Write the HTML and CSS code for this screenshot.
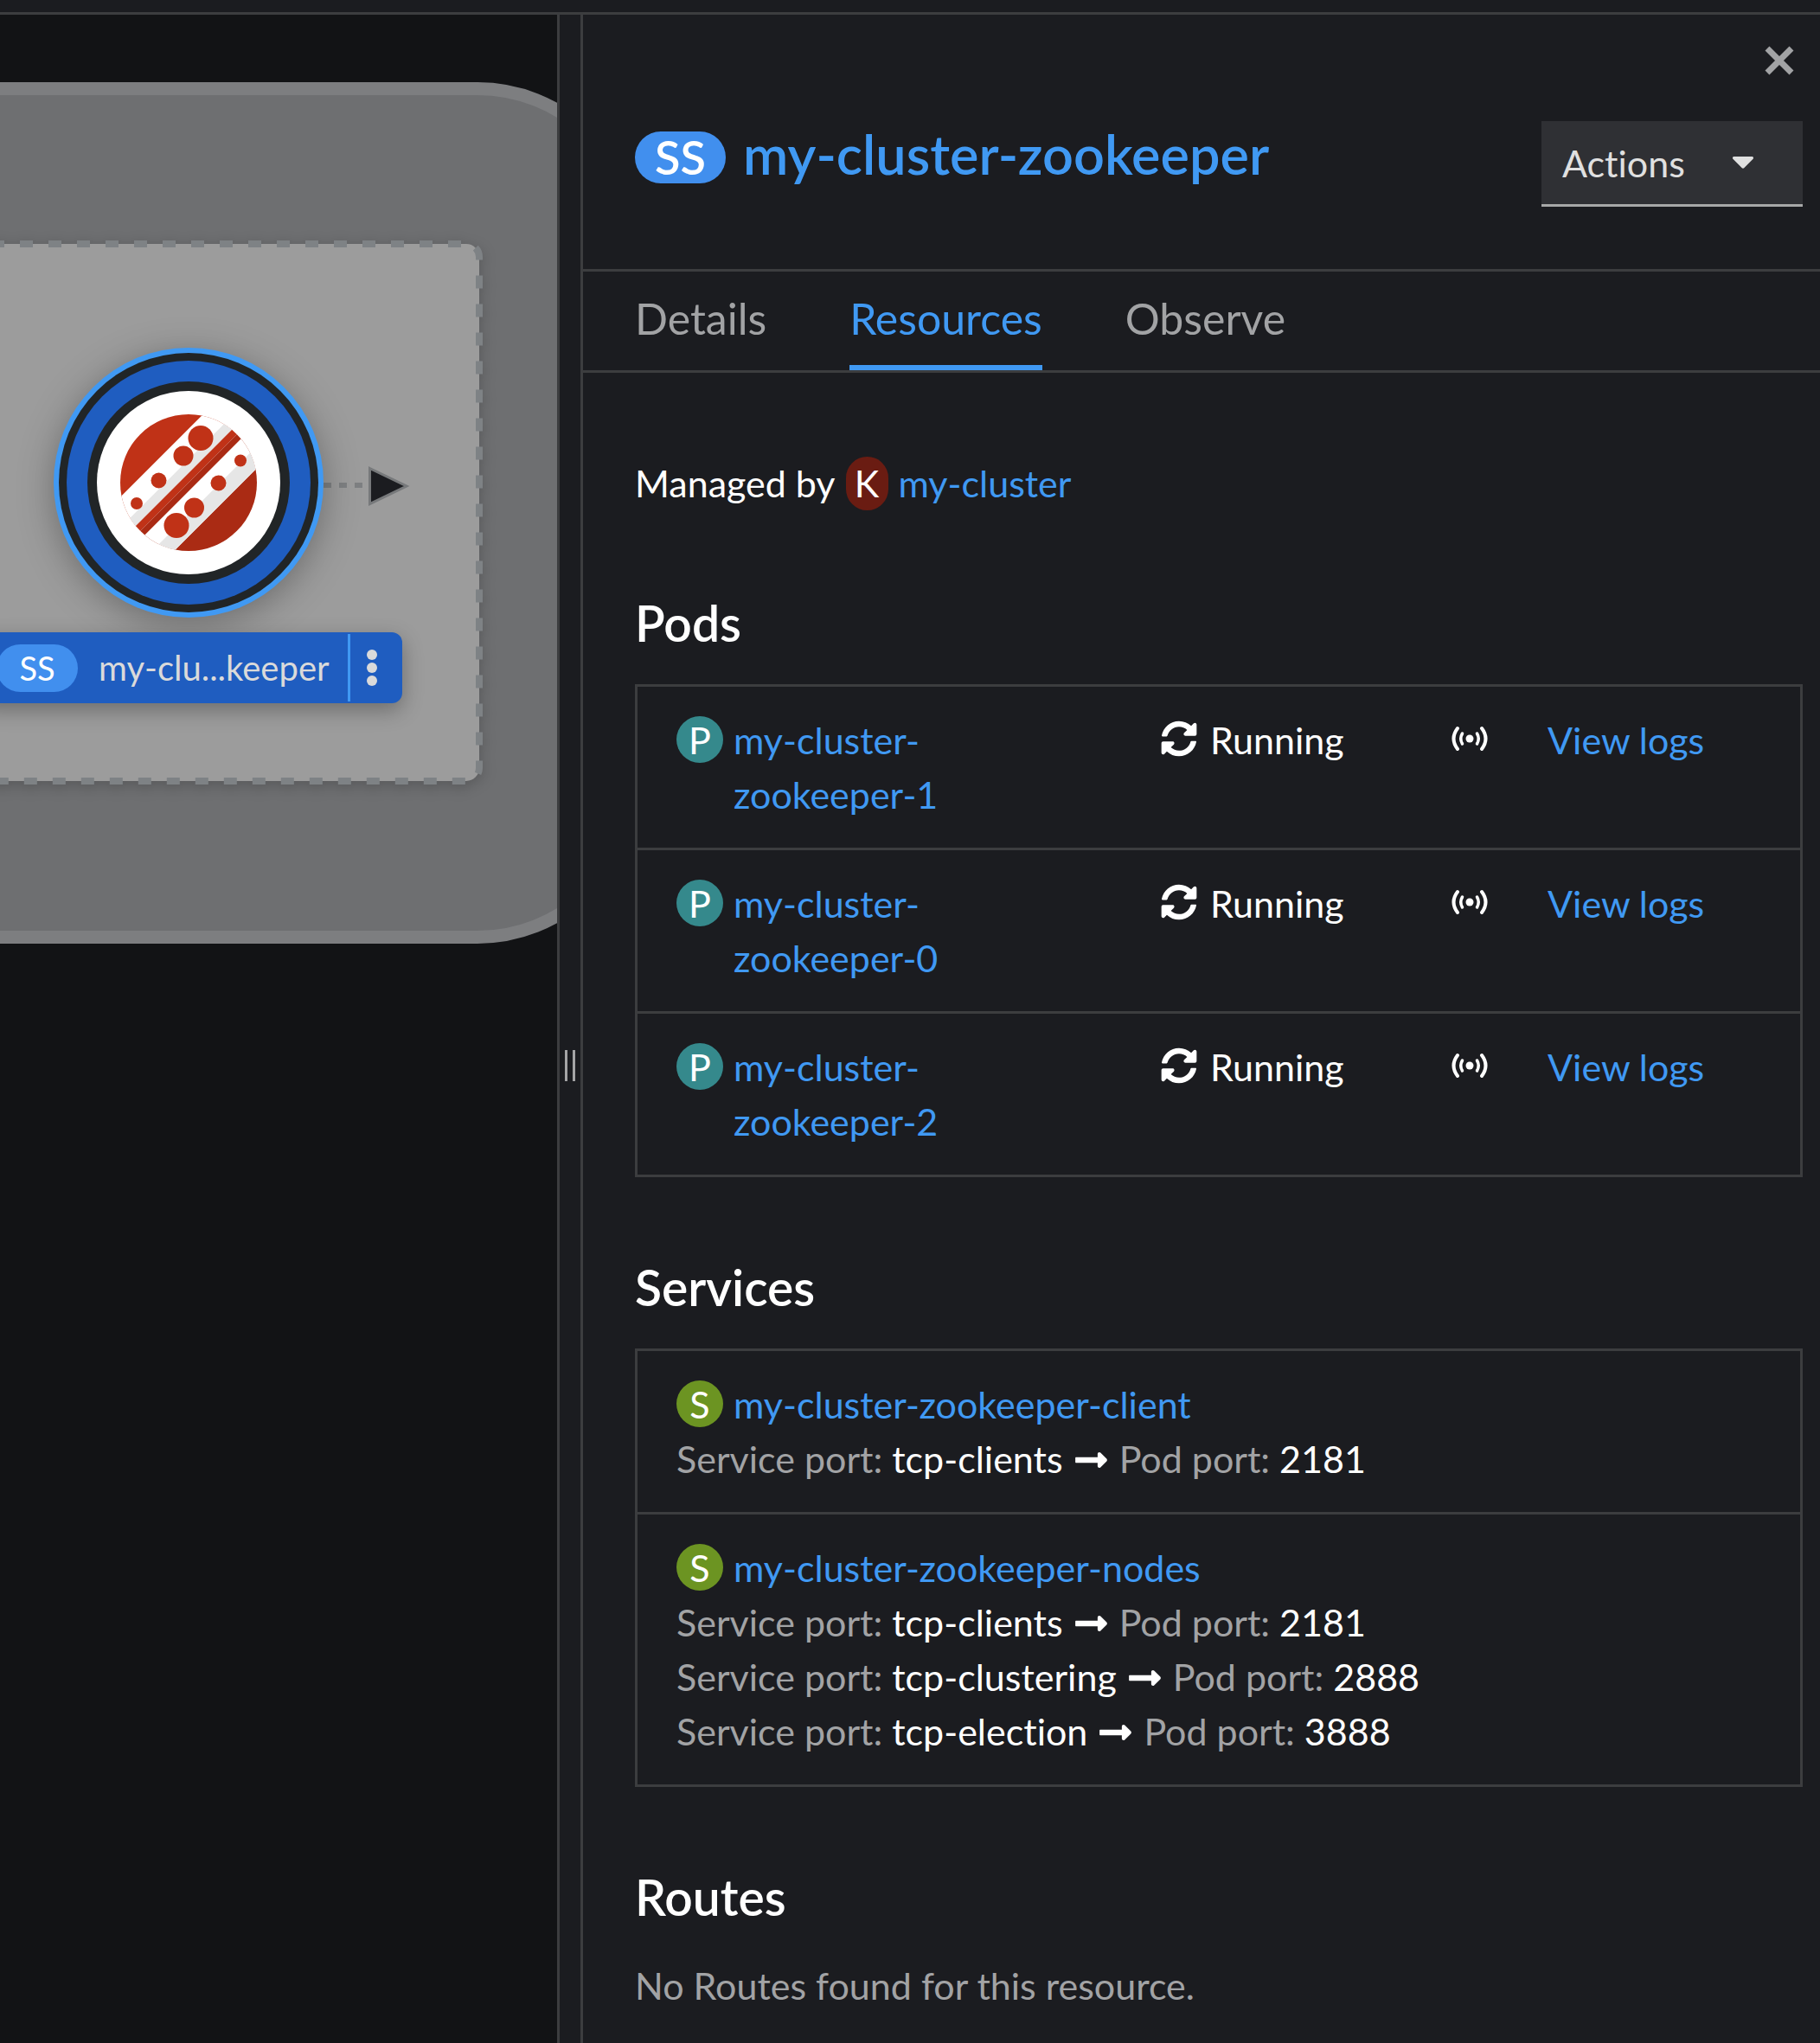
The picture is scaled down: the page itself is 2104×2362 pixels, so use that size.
FILE: index.html
```html
<!DOCTYPE html>
<html lang="en">
<head>
<meta charset="utf-8">
<title>my-cluster-zookeeper</title>
<link rel="stylesheet" href="styles.css">
</head>
<body>
<svg class="sprite" aria-hidden="true">
  <symbol id="i-sync" viewBox="0 0 512 512"><path d="M370.72 133.28C339.458 104.008 298.888 87.962 255.848 88c-77.458.068-144.328 53.178-162.791 126.85-1.344 5.363-6.122 9.15-11.651 9.15H24.103c-7.498 0-13.194-6.807-11.807-14.176C33.933 94.924 134.813 8 256 8c66.448 0 126.791 26.136 171.315 68.685L463.03 40.97C478.149 25.851 504 36.559 504 57.941V192c0 13.255-10.745 24-24 24H345.941c-21.382 0-32.09-25.851-16.971-40.971l41.75-41.749zM32 296h134.059c21.382 0 32.09 25.851 16.971 40.971l-41.75 41.75c31.262 29.273 71.835 45.319 114.876 45.28 77.418-.07 144.315-53.144 162.787-126.849 1.344-5.363 6.122-9.15 11.651-9.15h57.304c7.498 0 13.194 6.807 11.807 14.176C478.067 417.076 377.187 504 256 504c-66.448 0-126.791-26.136-171.315-68.685L48.97 471.03C33.851 486.149 8 475.441 8 454.059V320c0-13.255 10.745-24 24-24z"/></symbol>
  <symbol id="i-arrow" viewBox="0 0 448 512"><path d="M313.941 216H12c-6.627 0-12 5.373-12 12v56c0 6.627 5.373 12 12 12h301.941v46.059c0 21.382 25.851 32.09 40.971 16.971l86.059-86.059c9.373-9.373 9.373-24.569 0-33.941l-86.059-86.059c-15.119-15.119-40.971-4.411-40.971 16.971V216z"/></symbol>
  <symbol id="i-signal" viewBox="0 0 42 42"><circle cx="21" cy="21" r="4.500"/><g fill="none" stroke="currentColor" stroke-linecap="round"><path d="M12.500 15Q9 21 12.500 27M29.500 15Q33 21 29.500 27" stroke-width="3.500"/><path d="M7 9Q-2 21 7 33M35 9Q44 21 35 33" stroke-width="4"/></g></symbol>
</svg>

<div class="masthead"></div>
<div class="workspace">
  <section class="canvas" aria-label="Topology">
    <svg class="graph" width="644" height="1200" aria-hidden="true">
      <defs>
        <clipPath id="logo-clip"><circle cx="218" cy="558" r="79"/></clipPath>
      </defs>
      <rect class="group" x="-400" y="102.500" width="1135" height="981" rx="183"/>
      <rect class="subgroup" x="-322" y="282" width="876" height="621" rx="15"/>
      <path class="edge" d="M374 561H420"/>
      <path class="edge-head" d="M427.500 541.500L470 562L427.500 582.500Z"/>
      <g class="node">
        <circle cx="218" cy="558" r="156" fill="#4099f3"/>
        <circle cx="218" cy="558" r="150" fill="#212527"/>
        <circle cx="218" cy="558" r="141" fill="#1f5dc0"/>
        <circle cx="218" cy="558" r="117" fill="#212527"/>
        <circle cx="218" cy="558" r="106" fill="#fff"/>
      </g>
      <g clip-path="url(#logo-clip)">
        <g transform="translate(218 558) rotate(-45)">
          <rect x="-80" y="-80" width="160" height="80" fill="#c03217"/>
          <rect x="-80" y="0" width="160" height="80" fill="#aa2b14"/>
          <rect x="-80" y="-44" width="160" height="36" fill="#fff"/>
          <rect x="-80" y="-19" width="160" height="11" fill="#e6e6e6"/>
          <rect x="-80" y="7" width="160" height="37" fill="#fff"/>
          <rect x="-80" y="26" width="160" height="18" fill="#e6e6e6"/>
        </g>
        <g fill="#c03217">
          <circle cx="232" cy="506.500" r="14.500"/><circle cx="212" cy="527" r="11.500"/><circle cx="183.500" cy="555.500" r="9"/><circle cx="158" cy="582" r="7"/>
          <circle cx="278" cy="532.500" r="7"/><circle cx="252.500" cy="558.500" r="9"/><circle cx="224.500" cy="587" r="11.500"/><circle cx="204" cy="607.500" r="14.500"/>
        </g>
      </g>
    </svg>
    <div class="node-label">
      <span class="pill pill-small">SS</span>
      <span class="node-name">my-clu...keeper</span>
      <button class="kebab" type="button" aria-label="Node actions"><i></i><i></i><i></i></button>
    </div>
  </section>

  <div class="splitter" role="separator" aria-orientation="vertical"><i></i><i></i></div>

  <aside class="panel">
    <header class="panel-head">
      <button class="close" type="button" aria-label="Close">
        <svg viewBox="0 0 34 34" width="34" height="34"><path d="M3 3L31 31M31 3L3 31" stroke="currentColor" stroke-width="7"/></svg>
      </button>
      <div class="title-row">
        <h1 class="title"><span class="pill">SS</span><a href="#">my-cluster-zookeeper</a></h1>
        <button class="actions" type="button">Actions
          <svg viewBox="0 192 320 170" width="26" height="14"><path d="M31.300 192h257.300c17.800 0 26.700 21.500 14.100 34.100L174.100 354.800c-7.800 7.800-20.500 7.800-28.300 0L17.200 226.100C4.600 213.500 13.500 192 31.300 192z" fill="currentColor"/></svg>
        </button>
      </div>
    </header>
    <nav class="tabs">
      <button class="tab" type="button">Details</button>
      <button class="tab tab-active" type="button">Resources</button>
      <button class="tab" type="button">Observe</button>
    </nav>
    <div class="panel-body">
      <p class="managed">Managed by <span class="badge badge-k">K</span><a href="#">my-cluster</a></p>

      <h2>Pods</h2>
      <ul class="list">
        <li class="pod">
          <div class="cell name"><span class="badge badge-p">P</span><a href="#">my-cluster-zookeeper-1</a></div>
          <div class="cell status"><svg class="icon"><use href="#i-sync"/></svg>Running</div>
          <div class="cell links"><svg class="icon"><use href="#i-signal"/></svg><a href="#">View logs</a></div>
        </li>
        <li class="pod">
          <div class="cell name"><span class="badge badge-p">P</span><a href="#">my-cluster-zookeeper-0</a></div>
          <div class="cell status"><svg class="icon"><use href="#i-sync"/></svg>Running</div>
          <div class="cell links"><svg class="icon"><use href="#i-signal"/></svg><a href="#">View logs</a></div>
        </li>
        <li class="pod">
          <div class="cell name"><span class="badge badge-p">P</span><a href="#">my-cluster-zookeeper-2</a></div>
          <div class="cell status"><svg class="icon"><use href="#i-sync"/></svg>Running</div>
          <div class="cell links"><svg class="icon"><use href="#i-signal"/></svg><a href="#">View logs</a></div>
        </li>
      </ul>

      <h2>Services</h2>
      <ul class="list">
        <li class="cell">
          <div class="name"><span class="badge badge-s">S</span><a href="#">my-cluster-zookeeper-client</a></div>
          <div class="port"><span>Service port:</span> tcp-clients <svg class="arrow"><use href="#i-arrow"/></svg> <span>Pod port:</span> 2181</div>
        </li>
        <li class="cell">
          <div class="name"><span class="badge badge-s">S</span><a href="#">my-cluster-zookeeper-nodes</a></div>
          <div class="port"><span>Service port:</span> tcp-clients <svg class="arrow"><use href="#i-arrow"/></svg> <span>Pod port:</span> 2181</div>
          <div class="port"><span>Service port:</span> tcp-clustering <svg class="arrow"><use href="#i-arrow"/></svg> <span>Pod port:</span> 2888</div>
          <div class="port"><span>Service port:</span> tcp-election <svg class="arrow"><use href="#i-arrow"/></svg> <span>Pod port:</span> 3888</div>
        </li>
      </ul>

      <h2>Routes</h2>
      <p class="empty">No Routes found for this resource.</p>
    </div>
  </aside>
</div>
</body>
</html>
```
FILE: styles.css
```css
:root {
  --bg: #1b1c20;
  --line: #3c3d3f;
  --blue: #4099f3;
  --muted: #a2a3a5;
}
* { box-sizing: border-box; }
body {
  margin: 0;
  min-height: 100vh;
  display: flex;
  flex-direction: column;
  background: var(--bg);
  color: #fff;
  font: 43px/63px Lato, "Open Sans", sans-serif;
  font-variant-ligatures: none;
}
button {
  font: inherit;
  font-variant-ligatures: none;
  color: inherit;
  background: none;
  border: 0;
  padding: 0;
}
a { color: var(--blue); text-decoration: none; }
h1, h2, p, ul { margin: 0; padding: 0; list-style: none; }
svg { display: block; fill: currentColor; }
.sprite { position: absolute; width: 0; height: 0; }

.masthead { height: 17px; border-bottom: 3px solid var(--line); }
.workspace { flex: 1; display: flex; }

/* Topology canvas */
.canvas {
  position: relative;
  flex: 0 0 644px;
  overflow: hidden;
  background: #121315;
}
.graph { position: absolute; left: 0; top: -17px; }
.group { fill: #6e6f71; stroke: #7d7e80; stroke-width: 15; }
.subgroup {
  fill: #9c9c9c;
  stroke: #7e8285;
  stroke-width: 8;
  stroke-dasharray: 15 18;
  filter: drop-shadow(0 4px 8px rgba(0, 0, 0, .2));
}
.edge { stroke: #7e8082; stroke-width: 6; stroke-dasharray: 9 9; }
.edge-head { fill: #1b1c20; stroke: #77797b; stroke-width: 3; }
.node { filter: drop-shadow(0 8px 20px rgba(0, 0, 0, .3)); }
.node-label {
  position: absolute;
  left: -24px;
  top: 714px;
  width: 489px;
  height: 82px;
  display: flex;
  align-items: center;
  padding-left: 20px;
  border-radius: 12px;
  background: #1f5dc0;
  color: #dadada;
  box-shadow: 0 8px 24px rgba(0, 0, 0, .3);
}
.pill {
  display: inline-flex;
  align-items: center;
  justify-content: center;
  width: 105px;
  height: 60px;
  border-radius: 30px;
  background: #418fee;
  color: #fff;
  font-size: 54px;
}
.pill-small { width: 94px; height: 55px; font-size: 38px; }
.node-name { flex: 1; padding-left: 24px; font-size: 40px; }
.kebab {
  align-self: stretch;
  width: 63px;
  margin: 2px 0;
  padding-right: 10px;
  display: flex;
  flex-direction: column;
  align-items: center;
  justify-content: center;
  gap: 3px;
  border-left: 3px solid var(--blue);
}
.kebab i { width: 12px; height: 12px; border-radius: 50%; background: #dadada; }

.splitter {
  flex: 0 0 30px;
  display: flex;
  justify-content: center;
  align-items: center;
  gap: 6px;
  padding-top: 84px;
  border: solid var(--line);
  border-width: 0 3px;
}
.splitter i { width: 3px; height: 36px; background: #a4a4a6; }

/* Side panel */
.panel { flex: 1; min-width: 0; }
.panel-head { border-bottom: 3px solid var(--line); padding: 36px 20px 72px 60px; }
.close { display: block; margin: 0 10px 0 auto; color: var(--muted); }
.title-row {
  display: flex;
  justify-content: space-between;
  align-items: flex-start;
  padding-top: 53px;
}
.title {
  display: flex;
  align-items: flex-start;
  gap: 20px;
  padding-top: 12px;
  font-size: 63px;
  line-height: 52px;
  font-weight: 600;
}
.actions {
  width: 302px;
  height: 99px;
  display: flex;
  align-items: center;
  justify-content: space-between;
  padding: 0 56px 0 24px;
  background: #2f3034;
  border-bottom: 3px solid #a7a8a8;
  color: #e0e0e0;
}
.tabs {
  display: flex;
  gap: 96px;
  padding-left: 60px;
  border-bottom: 3px solid var(--line);
}
.tab {
  height: 114px;
  border-bottom: 6px solid transparent;
  font-size: 50px;
  color: var(--muted);
}
.tab-active { color: var(--blue); border-color: var(--blue); }

.panel-body { padding: 96px 20px 0 60px; }
.managed { display: flex; align-items: center; gap: 12px; margin-bottom: 99px; }
.badge {
  flex: none;
  display: inline-flex;
  align-items: center;
  justify-content: center;
  width: 54px;
  height: 54px;
  border-radius: 27px;
  color: #fff;
}
.badge-k { width: 49px; height: 62px; background: #6a1c12; }
.badge-p { background: #35898c; }
.badge-s { background: #6c9422; }
h2 { margin: 96px 0 39px; font-size: 57px; line-height: 63px; font-weight: 600; }
.list { border: 3px solid var(--line); }
.list > li + li { border-top: 3px solid var(--line); }
.pod { display: grid; grid-template-columns: 5fr 3fr 4fr; }
.cell { padding: 30px 45px; }
.name { display: flex; gap: 12px; }
.name .badge { margin-top: 4px; }
.status { display: flex; gap: 15px; }
.links { display: flex; gap: 69px; }
.icon { width: 42px; height: 42px; margin-top: 9px; }
.port span { color: var(--muted); }
.arrow { display: inline-block; width: 37px; height: 42px; margin: 0 3px; vertical-align: -6px; }
.empty { color: var(--muted); }
```
